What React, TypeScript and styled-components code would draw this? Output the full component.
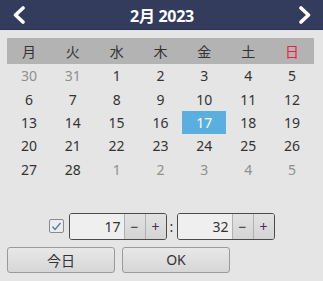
import { FC } from "react";
import styled, { createGlobalStyle } from "styled-components";

const GlobalStyle = createGlobalStyle`
  html, body {
    margin: 0;
    padding: 0;
    background: #e5e5e5;
  }
  body {
    font-family: "Noto Sans", "Noto Sans CJK JP", sans-serif;
  }
`;

const Picker = styled.div`
  width: 323px;
  height: 281px;
  background: #e5e5e5;
  display: flex;
  flex-direction: column;
  overflow: hidden;
`;

const Header = styled.div`
  height: 30px;
  box-sizing: border-box;
  background: #333c5d;
  border-bottom: 1px solid #2a3250;
  display: flex;
  align-items: center;
  justify-content: space-between;
  padding: 0 10px 0 11px;
`;

const Title = styled.div`
  color: #ffffff;
  font-family: "Open Sans", "Noto Sans CJK JP", sans-serif;
  font-weight: 700;
  font-size: 16px;
  letter-spacing: -0.3px;
`;

const NavButton = styled.button`
  width: 16px;
  height: 20px;
  padding: 0;
  border: none;
  background: none;
  display: flex;
  align-items: center;
  justify-content: center;
  cursor: pointer;
`;

const WeekBar = styled.div`
  margin: 8px 9px 0 7px;
  height: 26px;
  background: #b3b3b3;
  display: grid;
  grid-template-columns: repeat(7, 1fr);
  align-items: center;
`;

const WeekDay = styled.div<{ $sunday?: boolean }>`
  text-align: center;
  font-size: 14px;
  color: ${(p) => (p.$sunday ? "#f0203a" : "#333333")};
`;

const Days = styled.div`
  margin: 0 9px 0 7px;
  display: grid;
  grid-template-columns: repeat(7, 1fr);
  grid-auto-rows: 23.4px;
`;

const Day = styled.div<{ $muted?: boolean; $selected?: boolean }>`
  display: flex;
  align-items: center;
  justify-content: center;
  font-size: 14px;
  color: ${(p) => (p.$selected ? "#ffffff" : p.$muted ? "#8f8f8f" : "#333333")};
  background: ${(p) => (p.$selected ? "#5aafe0" : "transparent")};
`;

const TimeRow = styled.div`
  margin-top: 32px;
  display: flex;
  align-items: center;
  justify-content: center;
  height: 27px;
`;

const Check = styled.div`
  width: 13px;
  height: 12px;
  border: 1px solid #8a8a8a;
  border-radius: 2px;
  background: #ececec;
  margin-right: 5px;
  display: flex;
  align-items: center;
  justify-content: center;
`;

const Spinner = styled.div`
  width: 98px;
  height: 27px;
  box-sizing: border-box;
  border: 1px solid #4a4a4a;
  border-radius: 3px;
  display: flex;
  overflow: hidden;
`;

const SpinValue = styled.div`
  flex: 1;
  background: #efefef;
  display: flex;
  align-items: center;
  justify-content: flex-end;
  padding-right: 3px;
  font-size: 14px;
  color: #333333;
`;

const SpinButton = styled.div<{ $last?: boolean }>`
  width: 20px;
  border-left: 1px solid #b0b0b0;
  background: linear-gradient(#e2e2e2, #d4d4d4);
  display: flex;
  align-items: center;
  justify-content: center;
  font-size: 14px;
  color: ${(p) => (p.$last ? "#4a2a5a" : "#333333")};
`;

const Colon = styled.div`
  width: 10px;
  text-align: center;
  font-size: 14px;
  color: #333333;
`;

const ButtonRow = styled.div`
  margin: 7px 0 0 7px;
  display: flex;
  gap: 7px;
`;

const ActionButton = styled.button`
  width: 108px;
  height: 26px;
  box-sizing: border-box;
  border: 1px solid #9a9a9a;
  border-radius: 3px;
  background: linear-gradient(#e8e8e8, #d6d6d6);
  font-family: "Noto Sans", "Noto Sans CJK JP", sans-serif;
  font-size: 14px;
  color: #333333;
  padding: 0;
`;

const weekDays = ["月", "火", "水", "木", "金", "土", "日"];

const days: Array<{ n: number; muted?: boolean }> = [
  { n: 30, muted: true },
  { n: 31, muted: true },
  ...Array.from({ length: 28 }, (_, i) => ({ n: i + 1 })),
  ...[1, 2, 3, 4, 5].map((n) => ({ n, muted: true })),
];

const Chevron: FC<{ right?: boolean }> = ({ right }) => (
  <svg width="14" height="18" viewBox="0 0 14 18">
    <path
      d={right ? "M3 2 L10.5 9 L3 16" : "M11 2 L3.5 9 L11 16"}
      fill="none"
      stroke="#ffffff"
      strokeWidth="3.6"
      strokeLinecap="round"
      strokeLinejoin="round"
    />
  </svg>
);

const TimeSpinner: FC<{ value: string }> = ({ value }) => (
  <Spinner>
    <SpinValue>{value}</SpinValue>
    <SpinButton>−</SpinButton>
    <SpinButton $last>+</SpinButton>
  </Spinner>
);

const App: FC = () => (
  <>
    <GlobalStyle />
    <Picker>
      <Header>
        <NavButton>
          <Chevron />
        </NavButton>
        <Title>2月 2023</Title>
        <NavButton>
          <Chevron right />
        </NavButton>
      </Header>
      <WeekBar>
        {weekDays.map((d, i) => (
          <WeekDay key={d} $sunday={i === 6}>
            {d}
          </WeekDay>
        ))}
      </WeekBar>
      <Days>
        {days.map((d, i) => (
          <Day key={i} $muted={d.muted} $selected={!d.muted && d.n === 17}>
            {d.n}
          </Day>
        ))}
      </Days>
      <TimeRow>
        <Check>
          <svg width="11" height="9" viewBox="0 0 11 9">
            <path
              d="M1.5 4.5 L4 7.5 L9.5 1"
              fill="none"
              stroke="#4a78a8"
              strokeWidth="1.2"
            />
          </svg>
        </Check>
        <TimeSpinner value="17" />
        <Colon>:</Colon>
        <TimeSpinner value="32" />
      </TimeRow>
      <ButtonRow>
        <ActionButton>今日</ActionButton>
        <ActionButton>OK</ActionButton>
      </ButtonRow>
    </Picker>
  </>
);

export default App;
